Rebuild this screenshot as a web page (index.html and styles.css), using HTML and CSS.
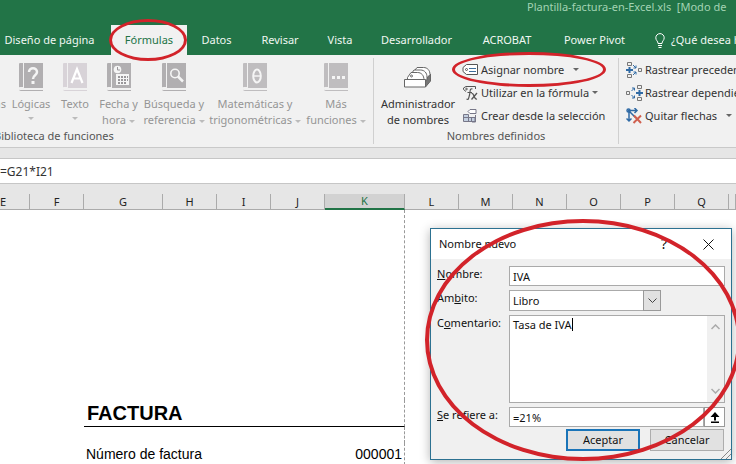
FILE: index.html
```html
<!DOCTYPE html>
<html lang="es">
  <head>
    <title>Plantilla-factura-en-Excel.xls</title>
    <meta charset="utf-8">
    <link rel="stylesheet" href="styles.css">
  </head>
  <body>

  <header class="top">
    <div class="title">Plantilla-factura-en-Excel.xls&nbsp; [Modo de</div>
    <nav class="tabs">
      <a class="tab first" href="#">Diseño de página</a>
      <a class="tab active" href="#">Fórmulas<span class="mark mark-tab"></span></a>
      <a class="tab" href="#">Datos</a>
      <a class="tab" href="#">Revisar</a>
      <a class="tab" href="#">Vista</a>
      <a class="tab" href="#">Desarrollador</a>
      <a class="tab" href="#">ACROBAT</a>
      <a class="tab" href="#">Power Pivot</a>
      <a class="tab tell" href="#">
        <svg width="10" height="15" viewBox="0 0 10 15" fill="none" stroke="#fff"><path d="M3 10.500C3 8 .8 7.500.8 4.800a4.200 4.200 0 0 1 8.400 0C9.200 7.500 7 8 7 10.500zM3 12.500h4M3.500 14.500h3"/></svg>
        <span>¿Qué desea hacer?</span>
      </a>
    </nav>
  </header>

  <div class="ribbon">
    <section class="group library">
      <div class="books">
        <button class="book cut" type="button"><span>as</span></button>
        <button class="book" type="button">
          <svg width="24" height="28" viewBox="0 0 24 28"><path fill="#b1afb1" d="M1 0h3v24H1a1 1 0 0 0 0 3h23v1H2a2 2 0 0 1-2-2V1a1 1 0 0 1 1-1zM5 0h19v25H5z"/><path d="M10 9c0-5 8-5 8 0 0 3.500-4 3-4 7" fill="none" stroke="#f5f5f5" stroke-width="2.500"/><path fill="#f5f5f5" d="M12.500 18h3v3h-3z"/></svg>
          <span>Lógicas</span><i class="arrow"></i>
        </button>
        <button class="book" type="button">
          <svg width="24" height="28" viewBox="0 0 24 28"><path fill="#d8d3d8" d="M1 0h3v24H1a1 1 0 0 0 0 3h23v1H2a2 2 0 0 1-2-2V1a1 1 0 0 1 1-1zM5 0h19v25H5z"/><path d="M8.500 20L14 6l5.500 14M10.500 15.500h7" fill="none" stroke="#fff" stroke-width="2.200"/></svg>
          <span>Texto</span><i class="arrow"></i>
        </button>
        <button class="book" type="button">
          <svg width="24" height="28" viewBox="0 0 24 28"><path fill="#b1afb1" d="M1 0h3v24H1a1 1 0 0 0 0 3h23v1H2a2 2 0 0 1-2-2V1a1 1 0 0 1 1-1zM5 0h19v25H5z"/><circle cx="10.500" cy="6.500" r="3.800" fill="#f5f5f5"/><path d="M10.500 4v3h2.500" fill="none" stroke="#99979a"/><path fill="#f5f5f5" d="M9 11h13v11H9z"/><path d="M11 13h2v2h-2zm3 0h2v2h-2zm3 0h2v2h-2zm-6 3h2v2h-2zm3 0h2v2h-2zm3 0h2v2h-2zm-6 3h2v2h-2zm3 0h2v2h-2zm3 0h2v2h-2zM20 13h1v2h-1zm0 3h1v2h-1z" fill="#99979a"/></svg>
          <span>Fecha y<br>hora <i class="arrow"></i></span>
        </button>
        <button class="book" type="button">
          <svg width="24" height="28" viewBox="0 0 24 28"><path fill="#b1afb1" d="M1 0h3v24H1a1 1 0 0 0 0 3h23v1H2a2 2 0 0 1-2-2V1a1 1 0 0 1 1-1zM5 0h19v25H5z"/><circle cx="13" cy="10.500" r="4.200" fill="none" stroke="#f5f5f5" stroke-width="1.600"/><path d="M16 13.500l5 5" stroke="#f5f5f5" stroke-width="2.500"/></svg>
          <span>Búsqueda y<br>referencia <i class="arrow"></i></span>
        </button>
        <button class="book" type="button">
          <svg width="24" height="28" viewBox="0 0 24 28"><path fill="#bfbdbf" d="M1 0h3v24H1a1 1 0 0 0 0 3h23v1H2a2 2 0 0 1-2-2V1a1 1 0 0 1 1-1zM5 0h19v25H5z"/><ellipse cx="14" cy="13" rx="3.800" ry="6.500" fill="none" stroke="#f5f5f5" stroke-width="2"/><path d="M10 13h8" stroke="#f5f5f5" stroke-width="1.500"/></svg>
          <span>Matemáticas y<br>trigonométricas <i class="arrow"></i></span>
        </button>
        <button class="book" type="button">
          <svg width="24" height="28" viewBox="0 0 24 28"><path fill="#bfbdbf" d="M1 0h3v24H1a1 1 0 0 0 0 3h23v1H2a2 2 0 0 1-2-2V1a1 1 0 0 1 1-1zM5 0h19v25H5z"/><path d="M8 13h3v3H8zm5 0h3v3h-3zm5 0h3v3h-3z" fill="#f5f5f5"/></svg>
          <span>Más<br>funciones <i class="arrow"></i></span>
        </button>
      </div>
      <div class="group-name">Biblioteca de funciones</div>
    </section>

    <section class="group names">
      <div class="split">
        <button class="book dark" type="button">
          <svg width="28" height="28" viewBox="0 0 28 28" fill="#fff" stroke="#666"><path d="M21.500 17l5-6v7l-5 6z" fill="#777"/><path d="M9.500 9l3.500-4.500h6.500c4 0 6.500 3 6.500 7L22 16z"/><path d="M6.500 12l3.500-5h6.500c4 0 6.500 3 6.500 7v3H7z"/><path d="M3.500 17v-2.500l3.500-5h6.500c4 0 6.500 3 6.500 7.500z"/><circle cx="7.500" cy="13" r="1"/><path d="M.5 16.500h21v7.500H.5z"/></svg>
          <span>Administrador<br>de nombres</span>
        </button>
        <div class="list">
          <button class="item" type="button">
            <svg width="18" height="16" viewBox="0 0 18 16" fill="none" stroke="#555"><path d="M4.500 2.500h11v10h-11L1 9.500v-4z" fill="#fff"/><circle cx="4.500" cy="7.500" r="1"/><path d="M7 6.500h7M7 9.500h7" stroke="#3d6f9c"/></svg>
            Asignar nombre <i class="arrow far"></i>
            <span class="mark mark-name"></span>
          </button>
          <button class="item" type="button">
            <svg width="18" height="16" viewBox="0 0 18 16" fill="none" stroke="#555"><path d="M4 6.500L1.500 4.500V3L4 1.500h9.500V4"/><circle cx="4.500" cy="4" r=".8"/><path d="M10.500 4C7.500 3 8.500 6 7.500 10s-1 5-3 4M5.500 7.500H10" stroke-width="1.200"/><path d="M9.500 8.500c3-1 2 6.500 5.500 5.500M15 8l-5.500 6.500" stroke-width="1.300"/></svg>
            Utilizar en la fórmula <i class="arrow"></i>
          </button>
          <button class="item" type="button">
            <svg width="18" height="16" viewBox="0 0 18 16" fill="none" stroke="#778"><path d="M1.500 6.500h5v3h6.500v4H1.500z" fill="#c3cfe0"/><path d="M1.500 9.500h5v4M9.500 9.500v4"/><path d="M8 1.500h6v4H8L6 3.500z" fill="#fff"/><path d="M13.500 7v7H10"/></svg>
            Crear desde la selección
          </button>
        </div>
      </div>
      <div class="group-name">Nombres definidos</div>
    </section>

    <section class="group audit">
      <div class="list">
        <button class="item" type="button">
          <svg width="18" height="16" viewBox="0 0 18 16" fill="none" stroke="#777"><path d="M1.500.500h4v3h-4zM1.500 12.500h4v3h-4zM12.500 6.500h3v3h-3z"/><path d="M0 8h7M3.500 5v6" stroke="#2f6aa5" stroke-width="2"/><path d="M7 3l3 3m0-2.500V6H7.500M7 13l3-3m0 2.500V10H7.500" stroke="#2f6aa5"/></svg>
          Rastrear precedentes
        </button>
        <button class="item" type="button">
          <svg width="18" height="16" viewBox="0 0 18 16" fill="none" stroke="#777"><path d="M11.500.500h4v3h-4zM11.500 12.500h4v3h-4zM.5 6.500h3v3h-3z"/><path d="M10 8h7M13.500 5v6" stroke="#2f6aa5" stroke-width="2"/><path d="M5.500 6l3-3M6 3h2.500v2.500M5.500 10l3 3M6 13h2.500v-2.500" stroke="#2f6aa5"/></svg>
          Rastrear dependientes
        </button>
        <button class="item" type="button">
          <svg width="18" height="16" viewBox="0 0 18 16" fill="none" stroke="#2f6aa5" stroke-width="1.500"><path d="M3 2v11M.5 10.500L3 13l2.500-2.500M2 2.500h9M8.500 0L11 2.500 8.500 5M3 3l7 7"/><circle cx="2.500" cy="2.500" r="1.500"/><path d="M8 7.500l7 7.500M15 7.500L7.500 15" stroke="#d0604f" stroke-width="2"/></svg>
          Quitar flechas <i class="arrow far"></i>
        </button>
      </div>
    </section>
  </div>

  <div class="formula">
    <input type="text" aria-label="Barra de fórmulas" value="=G21*I21">
  </div>

  <main class="sheet">
    <table>
      <colgroup>
        <col class="edge"><col><col class="wide"><col><col><col><col class="total"><col><col><col><col><col><col><col class="rest">
      </colgroup>
      <thead>
        <tr><th class="left">E</th><th>F</th><th>G</th><th>H</th><th>I</th><th>J</th><th class="selected">K</th><th>L</th><th>M</th><th>N</th><th>O</th><th>P</th><th>Q</th><th></th></tr>
      </thead>
      <tbody>
        <tr class="space"><td colspan="2"></td><td colspan="4"></td><td class="page"></td><td colspan="7"></td></tr>
        <tr class="heading"><td colspan="2"></td><td colspan="4" class="line">FACTURA</td><td class="line page"></td><td colspan="7"></td></tr>
        <tr class="small"><td colspan="2"></td><td colspan="4"></td><td class="page"></td><td colspan="7"></td></tr>
        <tr class="data"><td colspan="2"></td><td colspan="4">Número de factura</td><td class="page number">000001</td><td colspan="7"></td></tr>
      </tbody>
    </table>

    <form class="dialog">
      <div class="dialog-title">
        <span>Nombre nuevo</span>
        <button type="button" class="help">?</button>
        <button type="button" class="close" aria-label="Cerrar"><svg width="11" height="11" viewBox="0 0 11 11" stroke="#111"><path d="M.5.5l10 10M10.500.5l-10 10"/></svg></button>
      </div>
      <div class="fields">
        <label for="name"><u>N</u>ombre:</label>
        <input id="name" type="text" value="IVA">
        <label for="scope">Ám<u>b</u>ito:</label>
        <div class="select">
          <select id="scope"><option>Libro</option></select>
          <span class="drop"><svg width="9" height="6" viewBox="0 0 9 6" fill="none" stroke="#444"><path d="M.5.5l4 4 4-4"/></svg></span>
        </div>
        <label for="comment">C<u>o</u>mentario:</label>
        <div class="comment">
          <textarea id="comment">Tasa de IVA</textarea>
          <span class="caret"></span>
          <div class="scroll">
            <svg width="9" height="6" viewBox="0 0 9 6" fill="none" stroke="#aaa" stroke-width="1.500"><path d="M.5 5l4-4 4 4"/></svg>
            <svg width="9" height="6" viewBox="0 0 9 6" fill="none" stroke="#aaa" stroke-width="1.500"><path d="M.5 1l4 4 4-4"/></svg>
          </div>
        </div>
        <label for="refers"><u>S</u>e refiere a:</label>
        <div class="refers">
          <input id="refers" type="text" value="=21%">
          <button type="button" aria-label="Contraer"><svg width="10" height="11" viewBox="0 0 10 11"><path d="M5 0l4.500 5H6v3.500H4V5H.500zM1 9.500h8V11H1z"/></svg></button>
        </div>
      </div>
      <div class="actions">
        <button type="button" class="default">Aceptar</button>
        <button type="button">Cancelar</button>
      </div>
      <svg class="grip" width="10" height="10" viewBox="0 0 10 10" stroke="#888"><path d="M0 10L10 0M5 10l5-5"/></svg>
      <span class="mark mark-dialog"></span>
    </form>
  </main>

  </body>
</html>
```
FILE: styles.css
```css
* {
  box-sizing: border-box;
}
html, body {
  height: 100%;
}
body {
  margin: 0;
  display: flex;
  flex-direction: column;
  overflow: hidden;
  background: #fff;
  color: #333;
  font-family: "Noto Sans", "Open Sans", sans-serif;
  font-size: 11px;
  line-height: 16px;
}
button, input, select, textarea {
  font: inherit;
  color: inherit;
  margin: 0;
  padding: 0;
  border: 0;
  border-radius: 0;
  outline: none;
  background: none;
}
svg {
  flex: none;
}

.top {
  background: #227447;
  color: #fff;
  white-space: nowrap;
}
.title {
  height: 25px;
  padding: 0 0 0 527px;
  line-height: 13px;
  color: #a3d3b3;
}
.tabs {
  display: grid;
  grid-template-columns: 111px 76px 59px 68px 52px 101px 80px 95px minmax(0, 1fr);
  height: 30px;
}
.tab {
  position: relative;
  display: flex;
  align-items: center;
  justify-content: center;
  color: #f0f7f2;
  text-decoration: none;
}
.tab.first {
  padding-right: 12px;
}
.tab.active {
  background: #f1f1f1;
  color: #217346;
}
.tab.tell {
  justify-content: flex-start;
  gap: 6px;
  padding-left: 13px;
  overflow: hidden;
}

.mark {
  position: absolute;
  z-index: 5;
  border: 3px solid #d2232a;
  border-radius: 50%;
  pointer-events: none;
}
.mark-tab {
  left: -2px;
  right: 0;
  top: -6px;
  bottom: -6px;
}
.mark-name {
  left: -10px;
  top: -6px;
  width: 154px;
  height: 35px;
}
.mark-dialog {
  left: -6px;
  top: -10px;
  width: 316px;
  height: 242px;
  border-width: 4px;
}

.ribbon {
  display: flex;
  height: 93px;
  padding: 3px 0;
  background: #f1f1f1;
  border-bottom: 1px solid #c9c9c9;
  white-space: nowrap;
}
.group {
  display: flex;
  flex-direction: column;
  justify-content: space-between;
  border-right: 1px solid #d0d0d0;
}
.library {
  width: 374px;
}
.names {
  width: 245px;
}
.audit {
  flex: 1;
  min-width: 0;
  padding-left: 7px;
  border: 0;
  overflow: hidden;
}
.books {
  display: grid;
  grid-template-columns: 6px 50px 38px 49px 62px 100px 62px;
}
.book {
  display: flex;
  flex-direction: column;
  align-items: center;
  gap: 5px;
  padding-top: 5px;
  color: #959595;
}
.book.cut {
  align-items: flex-end;
  padding-top: 38px;
}
.book.dark {
  color: #333;
}
.arrow {
  display: inline-block;
  border: 3px solid transparent;
  border-top-color: #666;
  border-bottom: 0;
  vertical-align: middle;
}
.book .arrow {
  border-top-color: #bbb;
}
.group-name {
  text-align: center;
  color: #555;
}
.library .group-name {
  text-align: left;
  margin-left: -6px;
}
.split {
  display: grid;
  grid-template-columns: 88px 1fr;
}
.list {
  display: flex;
  flex-direction: column;
  align-items: flex-start;
}
.item {
  position: relative;
  display: flex;
  align-items: center;
  gap: 1px;
  height: 23px;
}
.item .arrow {
  margin-left: 2px;
}
.item .arrow.far {
  margin-left: 8px;
}

.formula {
  padding-top: 10px;
  background: #e6e6e6;
}
.formula input {
  display: block;
  width: 100%;
  height: 26px;
  background: #fff;
  border-top: 1px solid #c6c6c6;
  border-bottom: 1px solid #c6c6c6;
  font-size: 12px;
}

.sheet {
  position: relative;
  flex: 1;
  padding-top: 10px;
  background: linear-gradient(#e6e6e6 10px, #fff 10px);
}
table {
  width: 100%;
  table-layout: fixed;
  border-collapse: separate;
  border-spacing: 0;
  color: #000;
  font-family: "Liberation Sans", Arial, sans-serif;
}
col {
  width: 54px;
}
col.edge {
  width: 30px;
}
col.wide {
  width: 79px;
}
col.total {
  width: 80px;
}
col.rest {
  width: auto;
}
th {
  height: 16px;
  padding: 0;
  background: #e6e6e6;
  border-right: 1px solid #ababab;
  border-bottom: 1px solid #ababab;
  color: #222;
  font: 11px/15px "Noto Sans", sans-serif;
}
th.left {
  text-align: left;
}
th.selected {
  background: #d2d2d2;
  border-bottom: 2px solid #217346;
  color: #217346;
  line-height: 14px;
}
td {
  padding: 0;
}
td.page {
  border-right: 1px dashed #999;
}
td.line {
  border-bottom: 1px solid #000;
}
.space {
  height: 190px;
}
.heading {
  height: 27px;
  font-size: 20px;
  font-weight: bold;
}
.heading .line {
  padding-left: 3px;
}
.small {
  height: 16px;
}
.data {
  height: 22px;
  font-size: 14px;
}
.data td {
  padding: 0 2px;
}
.number {
  text-align: right;
}

.dialog {
  position: absolute;
  left: 430px;
  top: 44px;
  width: 302px;
  height: 232px;
  background: #f0f0f0;
  border: 1px solid #2c7191;
  box-shadow: 0 2px 10px rgba(0,0,0,0.3);
  color: #111;
}
.dialog-title {
  display: flex;
  align-items: center;
  height: 30px;
  padding: 0 17px 0 8px;
  background: #fff;
}
.dialog-title span {
  flex: 1;
}
.help {
  margin-right: 36px;
  font-size: 14px;
}
.close {
  display: flex;
}
.fields {
  display: grid;
  grid-template-columns: 72px 1fr;
  row-gap: 4px;
  padding: 7px 6px 0;
}
.fields label {
  white-space: nowrap;
}
.fields input, .fields select, .fields textarea {
  display: block;
  width: 100%;
  height: 20px;
  padding-left: 3px;
  background: #fff;
  border: 1px solid #aaa;
}
.select {
  position: relative;
  width: 152px;
}
.fields select {
  height: 21px;
  appearance: none;
}
.drop {
  position: absolute;
  right: 0;
  top: 0;
  bottom: 0;
  display: flex;
  align-items: center;
  justify-content: center;
  width: 18px;
  background: #e1e1e1;
  border: 1px solid #999;
  pointer-events: none;
}
.comment {
  position: relative;
}
.fields textarea {
  height: 88px;
  padding-top: 1px;
  resize: none;
  overflow: hidden;
}
.caret {
  position: absolute;
  left: 63px;
  top: 3px;
  width: 1px;
  height: 13px;
  background: #000;
}
.scroll {
  position: absolute;
  right: 1px;
  top: 1px;
  bottom: 1px;
  display: flex;
  flex-direction: column;
  align-items: center;
  justify-content: space-between;
  width: 17px;
  padding: 8px 0;
  background: #f0f0f0;
}
.refers {
  display: flex;
}
.refers input {
  flex: 1;
  min-width: 0;
}
.refers button {
  display: flex;
  align-items: center;
  justify-content: center;
  width: 21px;
  background: #fff;
  border: 1px solid #999;
}
.actions {
  display: flex;
  justify-content: flex-end;
  gap: 10px;
  padding: 2px 7px 0 0;
}
.actions button {
  width: 74px;
  height: 22px;
  background: #e1e1e1;
  border: 1px solid #adadad;
}
.actions .default {
  border: 2px solid #1a74b8;
}
.grip {
  position: absolute;
  right: 0;
  bottom: 0;
}
```
